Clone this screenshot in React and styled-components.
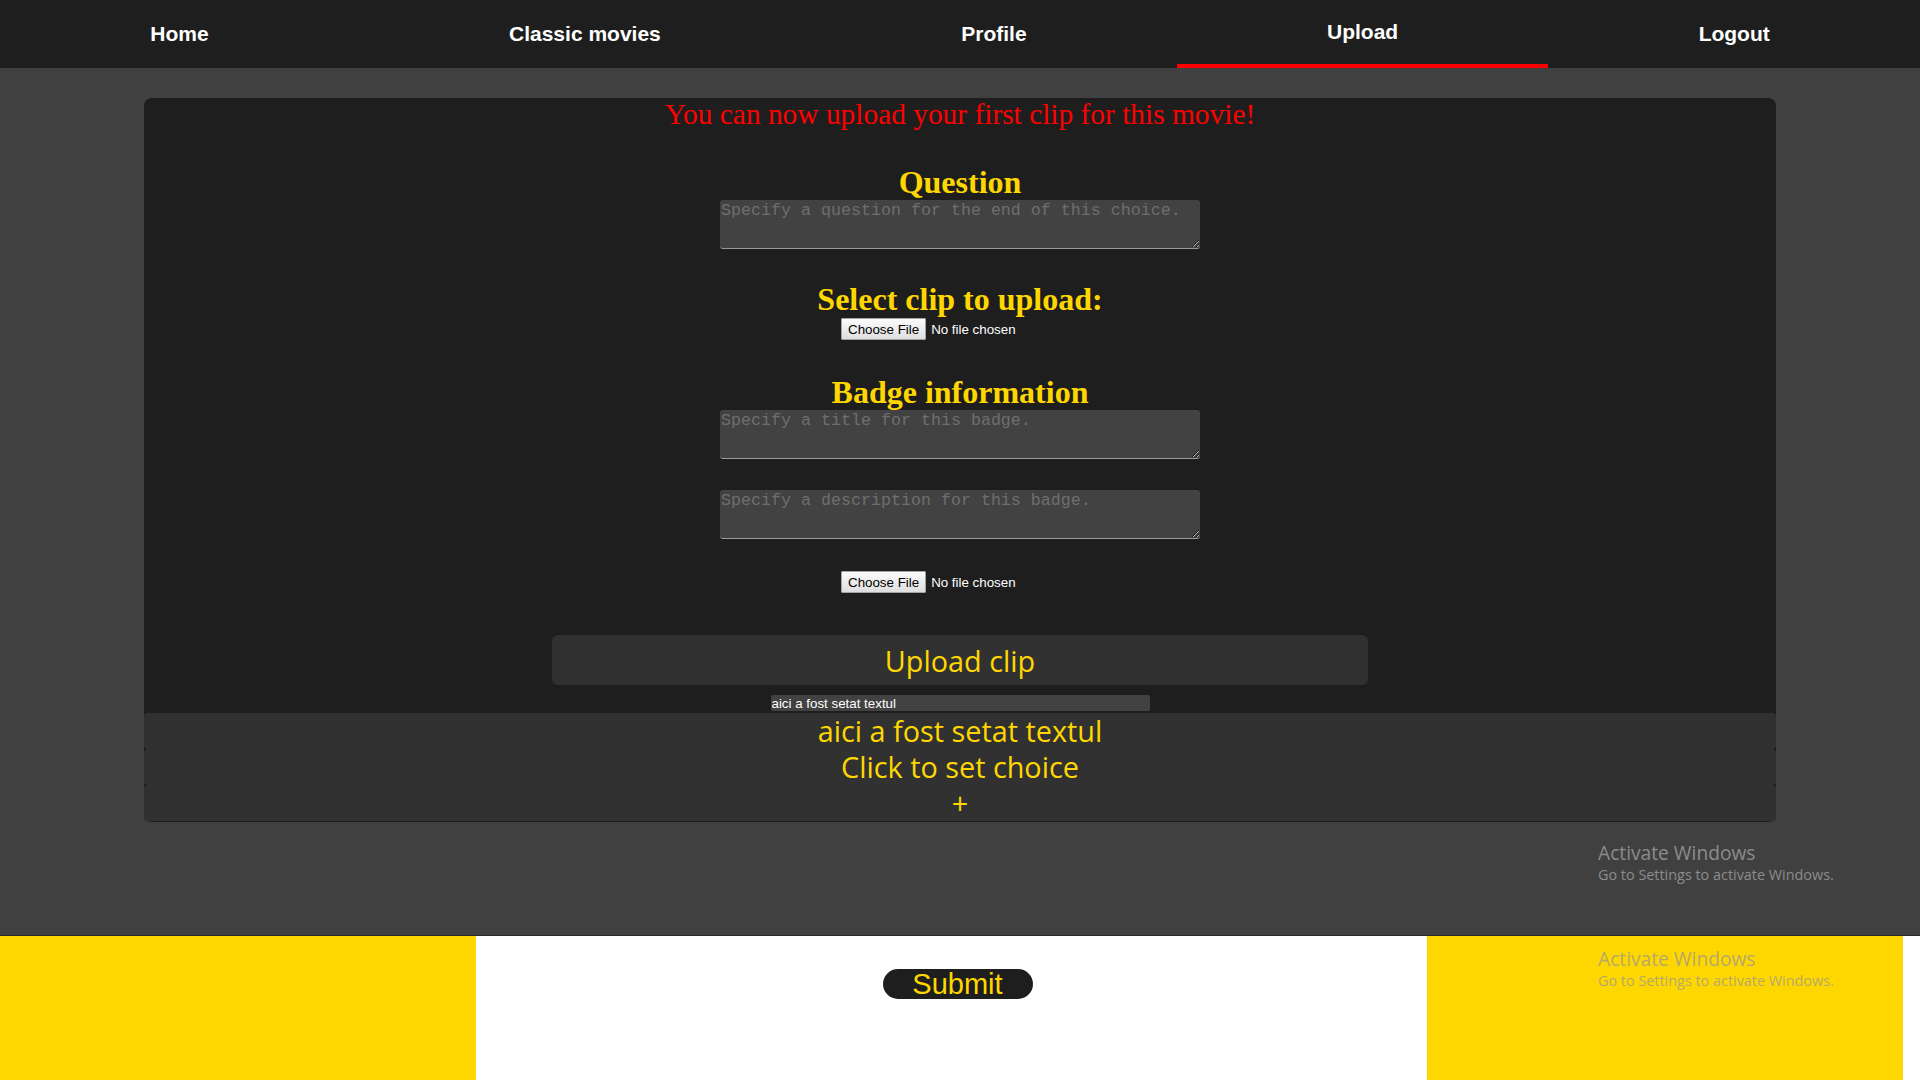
import React from "react";
import styled, { createGlobalStyle } from "styled-components";

const GOLD = "#ffd700";

const GlobalStyle = createGlobalStyle`
  html, body {
    margin: 0;
    padding: 0;
    background: #fff;
  }
  * {
    box-sizing: border-box;
  }
`;

const Page = styled.div`
  position: relative;
  width: 1920px;
  height: 1080px;
  overflow: hidden;
  display: flex;
  flex-direction: column;
`;

const Nav = styled.nav`
  display: flex;
  height: 68px;
  background: #1e1e1e;
`;

const NavItem = styled.a`
  flex: 1 1 auto;
  display: flex;
  align-items: center;
  justify-content: center;
  color: #fff;
  text-decoration: none;
  font: bold 21px "Liberation Sans", Arial, sans-serif;
  border-bottom: ${props => (props.$active ? "4px solid #ff0000" : "0")};
`;

const Main = styled.main`
  background: #404040;
  padding: 30px 0 113px;
  border-bottom: 1px solid #2a2a2a;
`;

/**
 * The dark card that holds the whole upload form.
 */

const Panel = styled.section`
  width: 85%;
  margin: 0 auto;
  background: #1e1e1e;
  border-radius: 8px;
  padding-bottom: 1px;
  display: flex;
  flex-direction: column;
  align-items: center;
`;

const Notice = styled.h2`
  margin: 0;
  color: #ff0000;
  font: normal 29.4px/33px "Liberation Serif", "Times New Roman", serif;
`;

const Heading = styled.h1`
  margin: ${props => props.$gap || 0}px 0 0;
  color: ${GOLD};
  font: bold 32px/36px "Liberation Serif", "Times New Roman", serif;
`;

const TextArea = styled.textarea`
  display: block;
  width: 480px;
  height: 49px;
  margin-top: ${props => props.$gap || 0}px;
  padding: 1px 1px 0;
  background: #424242;
  color: #ddd;
  border: none;
  border-bottom: 1px solid #9a9a9a;
  border-radius: 3px;
  font: 16.67px "Liberation Mono", "Courier New", monospace;
  outline: none;

  &::placeholder {
    color: #6e6e6e;
  }
`;

const FilePicker = styled.div`
  width: 238px;
  margin-top: ${props => props.$gap || 0}px;
  display: flex;
  align-items: center;
  gap: 5px;
  font: 13.33px "Liberation Sans", Arial, sans-serif;
`;

const FileButton = styled.button`
  height: 22px;
  padding: 0 6px;
  border: 1px solid #a3a3a3;
  border-radius: 1px;
  background: linear-gradient(#fbfbfb, #dedede);
  color: #000;
  font: inherit;
`;

const FileStatus = styled.span`
  color: #fff;
`;

const UploadButton = styled.button`
  width: 50%;
  height: 50px;
  margin-top: 42px;
  border: none;
  border-radius: 6px;
  background: #313131;
  color: ${GOLD};
  font: 28.8px "Open Sans", sans-serif;
`;

const ChoiceInput = styled.input`
  width: 379px;
  height: 16px;
  margin-top: 10px;
  padding: 0 1px;
  border: none;
  border-radius: 2px;
  background: #424242;
  color: #fff;
  font: 13.33px "Liberation Sans", Arial, sans-serif;
  outline: none;
`;

const ChoiceCard = styled.div`
  width: 100%;
  margin-top: 2px;
  display: flex;
  flex-direction: column;
`;

const ChoiceRow = styled.div`
  height: 36px;
  background: #313131;
  border-radius: 4px;
  text-align: center;
  color: ${GOLD};
  font: 28.8px/36px "Open Sans", sans-serif;
`;

const Footer = styled.footer`
  flex: 1;
  display: grid;
  grid-template-columns: 476px 951px 476px 1fr;
`;

const Side = styled.div`
  background: ${GOLD};
`;

const Center = styled.div`
  background: #fff;
  display: flex;
  justify-content: center;
  padding-top: 33px;
`;

const SubmitButton = styled.button`
  width: 150px;
  height: 30px;
  margin-left: 12px;
  padding: 0;
  border: none;
  border-radius: 15px;
  background: #1e1e1e;
  color: ${GOLD};
  font: 29px/30px "Liberation Sans", Arial, sans-serif;
`;

const Watermark = styled.div`
  position: absolute;
  left: 1598px;
  top: ${props => props.$top}px;
  color: ${props => props.$tone};
  font-family: "Open Sans", sans-serif;
  pointer-events: none;

  strong {
    display: block;
    font-weight: normal;
    font-size: 19.2px;
    line-height: 25px;
  }

  span {
    display: block;
    font-size: 14.4px;
    line-height: 20px;
  }
`;

const tabs = ["Home", "Classic movies", "Profile", "Upload", "Logout"];

const App = () => {
  return (
    <Page>
      <GlobalStyle />
      <Nav>
        {tabs.map(tab => (
          <NavItem key={tab} href="#" $active={tab === "Upload"}>
            {tab}
          </NavItem>
        ))}
      </Nav>

      <Main>
        <Panel>
          <Notice>You can now upload your first clip for this movie!</Notice>

          <Heading $gap={33}>Question</Heading>
          <TextArea placeholder="Specify a question for the end of this choice." />

          <Heading $gap={32}>Select clip to upload:</Heading>
          <FilePicker $gap={1}>
            <FileButton>Choose File</FileButton>
            <FileStatus>No file chosen</FileStatus>
          </FilePicker>

          <Heading $gap={34}>Badge information</Heading>
          <TextArea placeholder="Specify a title for this badge." />
          <TextArea $gap={31} placeholder="Specify a description for this badge." />
          <FilePicker $gap={32}>
            <FileButton>Choose File</FileButton>
            <FileStatus>No file chosen</FileStatus>
          </FilePicker>

          <UploadButton>Upload clip</UploadButton>
          <ChoiceInput defaultValue="aici a fost setat textul" />

          <ChoiceCard>
            <ChoiceRow>aici a fost setat textul</ChoiceRow>
            <ChoiceRow>Click to set choice</ChoiceRow>
            <ChoiceRow>+</ChoiceRow>
          </ChoiceCard>
        </Panel>
      </Main>

      <Footer>
        <Side />
        <Center>
          <SubmitButton>Submit</SubmitButton>
        </Center>
        <Side />
        <Center />
      </Footer>

      <Watermark $top={840} $tone="#8c8c8c">
        <strong>Activate Windows</strong>
        <span>Go to Settings to activate Windows.</span>
      </Watermark>
      <Watermark $top={946} $tone="rgba(150, 150, 150, 0.72)">
        <strong>Activate Windows</strong>
        <span>Go to Settings to activate Windows.</span>
      </Watermark>
    </Page>
  );
};

export default App;
